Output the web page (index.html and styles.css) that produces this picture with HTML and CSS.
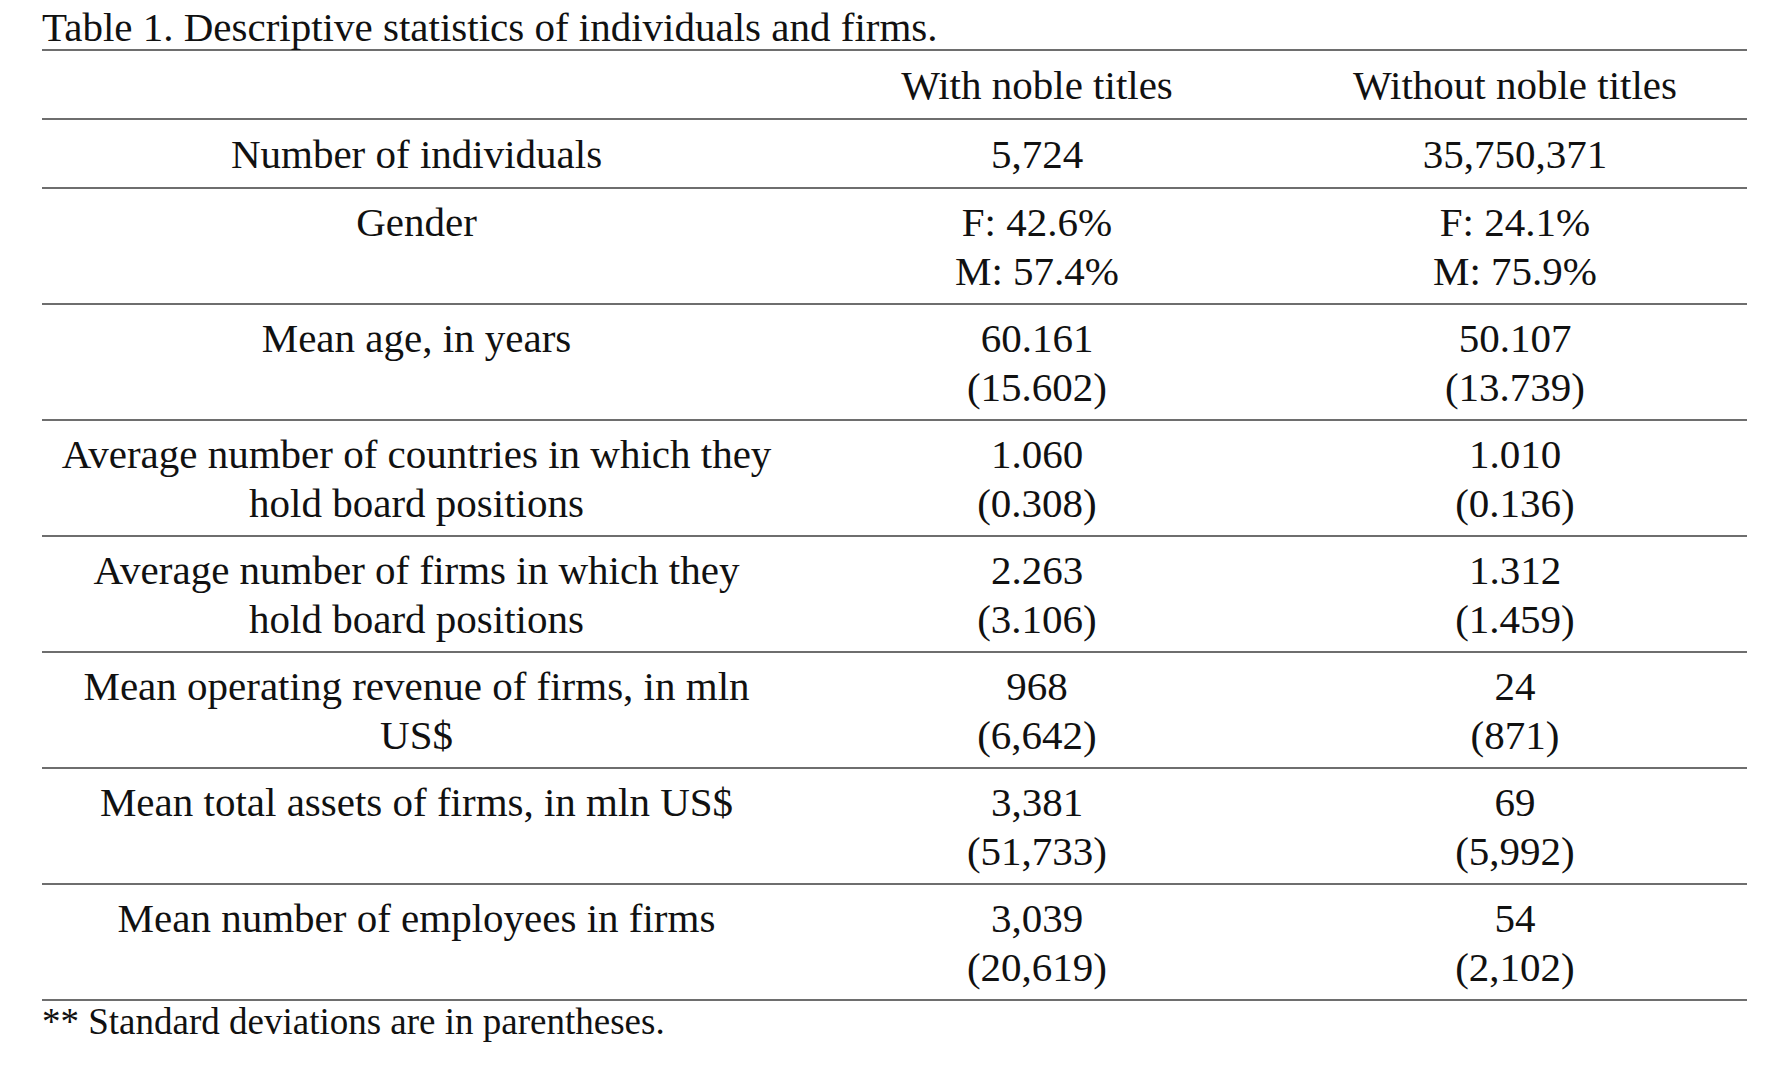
FILE: index.html
```html
<!DOCTYPE html>
<html lang="en">
<head>
<meta charset="utf-8">
<title>Table 1. Descriptive statistics of individuals and firms.</title>
<link rel="stylesheet" href="styles.css">
</head>
<body>
<div class="page">
  <div class="title">Table 1. Descriptive statistics of individuals and firms.</div>
  <table class="stats">
    <colgroup>
      <col class="c-label">
      <col class="c-with">
      <col class="c-without">
    </colgroup>
    <thead>
      <tr class="single">
        <th></th>
        <th>With noble titles</th>
        <th>Without noble titles</th>
      </tr>
    </thead>
    <tbody>
      <tr class="single">
        <td>Number of individuals</td>
        <td>5,724</td>
        <td>35,750,371</td>
      </tr>
      <tr>
        <td>Gender</td>
        <td>F: 42.6%<br>M: 57.4%</td>
        <td>F: 24.1%<br>M: 75.9%</td>
      </tr>
      <tr>
        <td>Mean age, in years</td>
        <td>60.161<br>(15.602)</td>
        <td>50.107<br>(13.739)</td>
      </tr>
      <tr>
        <td>Average number of countries in which they<br>hold board positions</td>
        <td>1.060<br>(0.308)</td>
        <td>1.010<br>(0.136)</td>
      </tr>
      <tr>
        <td>Average number of firms in which they<br>hold board positions</td>
        <td>2.263<br>(3.106)</td>
        <td>1.312<br>(1.459)</td>
      </tr>
      <tr>
        <td>Mean operating revenue of firms, in mln<br>US$</td>
        <td>968<br>(6,642)</td>
        <td>24<br>(871)</td>
      </tr>
      <tr>
        <td>Mean total assets of firms, in mln US$</td>
        <td>3,381<br>(51,733)</td>
        <td>69<br>(5,992)</td>
      </tr>
      <tr>
        <td>Mean number of employees in firms</td>
        <td>3,039<br>(20,619)</td>
        <td>54<br>(2,102)</td>
      </tr>
    </tbody>
  </table>
  <div class="note">** Standard deviations are in parentheses.</div>
</div>
</body>
</html>
```

FILE: styles.css
```css
html, body {
  margin: 0;
  padding: 0;
  background: #ffffff;
}

body {
  font-family: "Liberation Serif", "Times New Roman", serif;
  color: #111111;
}

.page {
  padding-left: 42px;
  width: 1705px;
}

.title {
  font-size: 41px;
  line-height: 44px;
  padding-top: 5px;
  height: 44px;
  white-space: nowrap;
}

.stats {
  width: 1705px;
  border-collapse: collapse;
  table-layout: fixed;
  border-top: 2px solid #6e6e6e;
  font-size: 41px;
  line-height: 49px;
}

.c-label { width: 749px; }
.c-with { width: 492px; }
.c-without { width: 464px; }

.stats th,
.stats td {
  padding: 9px 0 7px;
  text-align: center;
  vertical-align: top;
  font-weight: normal;
  border-bottom: 2px solid #6e6e6e;
  white-space: nowrap;
}

.stats .single th,
.stats .single td {
  padding: 10px 0 8px;
}

.note {
  font-size: 37px;
  line-height: 42px;
  white-space: nowrap;
}
```
